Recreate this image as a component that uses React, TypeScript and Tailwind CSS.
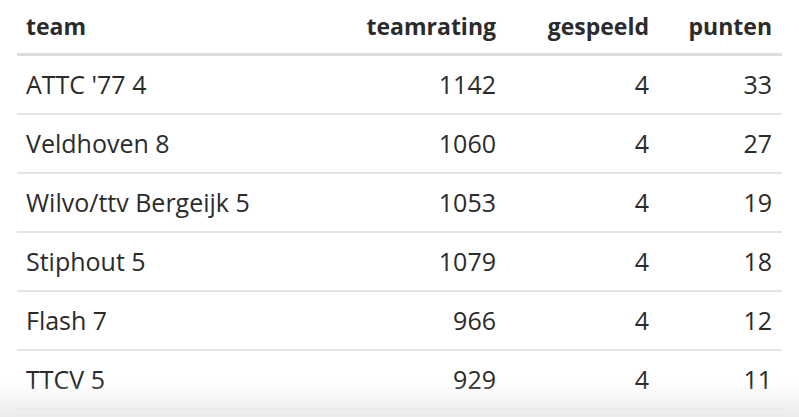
import React from "react";

const rows = [
  ["ATTC '77 4", "1142", "4", "33"],
  ["Veldhoven 8", "1060", "4", "27"],
  ["Wilvo/ttv Bergeijk 5", "1053", "4", "19"],
  ["Stiphout 5", "1079", "4", "18"],
  ["Flash 7", "966", "4", "12"],
  ["TTCV 5", "929", "4", "11"],
];

export default function App() {
  return (
    <div
      className="relative w-[799px] h-[417px] overflow-hidden bg-white text-[#2b2b2b]"
      style={{ fontFamily: "'Open Sans', 'Noto Sans', sans-serif" }}
    >
      <div className="px-[17px]">
        <div className="grid grid-cols-[323px_166px_153px_123px] h-[56px] border-b-[3px] border-[#dcdcdc] items-center text-[23px] font-bold leading-none">
          <div className="pl-[9px]">team</div>
          <div className="text-right pr-[10px]">teamrating</div>
          <div className="text-right pr-[10px]">gespeeld</div>
          <div className="text-right pr-[10px]">punten</div>
        </div>
        {rows.map((r, i) => (
          <div
            key={i}
            className="grid grid-cols-[323px_166px_153px_123px] h-[59px] border-b-2 border-[#e4e4e4] items-center text-[25px] leading-none"
          >
            <div className="pl-[9px]">{r[0]}</div>
            <div className="text-right pr-[10px]">{r[1]}</div>
            <div className="text-right pr-[10px]">{r[2]}</div>
            <div className="text-right pr-[10px]">{r[3]}</div>
          </div>
        ))}
      </div>
      <div className="absolute left-0 right-0 bottom-0 h-[34px] bg-gradient-to-b from-white/0 to-[#ebebeb]" />
    </div>
  );
}
